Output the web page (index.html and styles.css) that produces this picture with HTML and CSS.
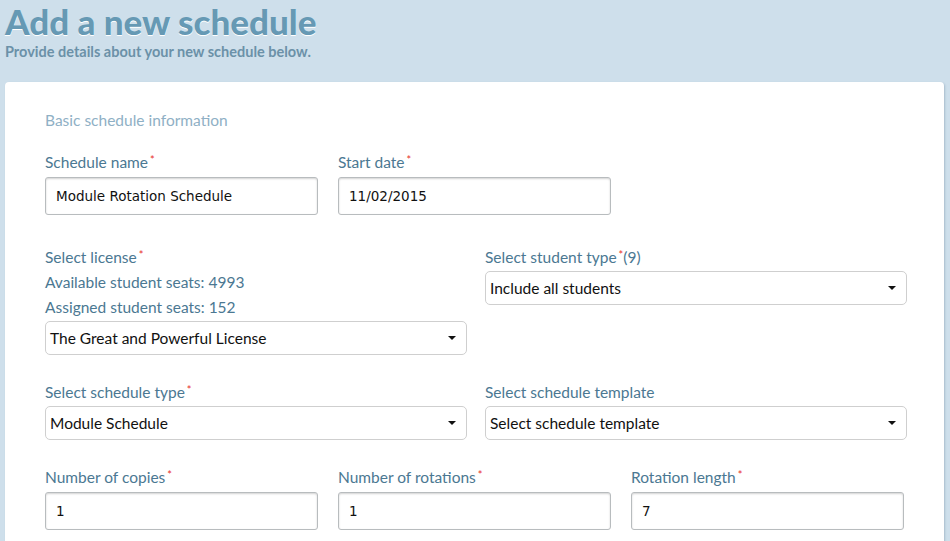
FILE: index.html
```html
<!DOCTYPE html>
<html>
<head>
<meta charset="utf-8">
<link rel="stylesheet" href="styles.css">
</head>
<body>
<header class="page-head">
  <h1 class="title">Add a new schedule</h1>
  <p class="subtitle">Provide details about your new schedule below.</p>
</header>
<main class="card">
  <h2 class="section">Basic schedule information</h2>

  <div class="row three row-first">
    <div class="field">
      <label class="label">Schedule name<span class="req">*</span></label>
      <div class="input">Module Rotation Schedule</div>
    </div>
    <div class="field">
      <label class="label">Start date<span class="req">*</span></label>
      <div class="input">11/02/2015</div>
    </div>
  </div>

  <div class="row two">
    <div class="field">
      <label class="label">Select license<span class="req">*</span></label>
      <div class="info">Available student seats: 4993</div>
      <div class="info">Assigned student seats: 152</div>
      <div class="select"><span>The Great and Powerful License</span><i class="caret"></i></div>
    </div>
    <div class="field">
      <label class="label">Select student type<span class="req">*</span>(9)</label>
      <div class="select"><span>Include all students</span><i class="caret"></i></div>
    </div>
  </div>

  <div class="row two">
    <div class="field">
      <label class="label">Select schedule type<span class="req">*</span></label>
      <div class="select"><span>Module Schedule</span><i class="caret"></i></div>
    </div>
    <div class="field">
      <label class="label">Select schedule template</label>
      <div class="select"><span>Select schedule template</span><i class="caret"></i></div>
    </div>
  </div>

  <div class="row three">
    <div class="field">
      <label class="label">Number of copies<span class="req">*</span></label>
      <div class="input">1</div>
    </div>
    <div class="field">
      <label class="label">Number of rotations<span class="req">*</span></label>
      <div class="input">1</div>
    </div>
    <div class="field">
      <label class="label">Rotation length<span class="req">*</span></label>
      <div class="input">7</div>
    </div>
  </div>
</main>
</body>
</html>
```

FILE: styles.css
```css
html, body {
  margin: 0;
  padding: 0;
}
body {
  background: #cedfeb;
  font-family: Lato, "Open Sans", sans-serif;
  width: 950px;
  height: 541px;
  overflow: hidden;
}
.page-head {
  padding: 0 0 0 5px;
  height: 82px;
}
.title {
  margin: 0;
  font-size: 35px;
  line-height: 42px;
  font-weight: 900;
  color: #6699b4;
  text-shadow: 0 1px 0 #ffffff;
}
.subtitle {
  margin: 1px 0 0;
  font-size: 14.5px;
  line-height: 18px;
  color: #6b91a8;
  font-weight: 700;
}
.card {
  margin-left: 5px;
  width: 939px;
  height: 470px;
  background: #ffffff;
  border-radius: 4px 4px 0 0;
  box-shadow: 1px 1px 2px rgba(60, 90, 120, 0.25);
  box-sizing: border-box;
  padding: 26px 0 0 40px;
}
.section {
  margin: 0;
  font-size: 15.5px;
  line-height: 25px;
  font-weight: 400;
  color: #8fb0c5;
}
.row {
  display: flex;
  margin-top: 25px;
}
.row-first {
  margin-top: 17px;
}
.row.three {
  gap: 20px;
}
.row.three .field {
  width: 273px;
}
.row.two {
  gap: 18px;
}
.row.three + .row.two {
  margin-top: 30px;
}
.row.two .field {
  width: 422px;
}
.label {
  display: block;
  font-size: 15.5px;
  line-height: 25px;
  color: #4b7892;
  margin-bottom: 2px;
}
.row.two .label {
  margin-bottom: 1px;
}
.info {
  font-size: 15.5px;
  line-height: 25px;
  color: #4b7892;
}
.field .info + .select {
  margin-top: 1px;
}
.field .info:first-of-type {
  margin-top: -1px;
}
.req {
  color: #e8302a;
  font-size: 11px;
  line-height: 0;
  vertical-align: 4px;
  margin-left: 2px;
}
.input {
  box-sizing: border-box;
  height: 38px;
  border: 1px solid #b8bcbe;
  border-radius: 3px;
  box-shadow: inset 0 1px 2px rgba(0, 0, 0, 0.18);
  padding: 0 10px;
  font-family: "DejaVu Sans", sans-serif;
  font-size: 13.5px;
  line-height: 36px;
  color: #111111;
}
.select {
  box-sizing: border-box;
  height: 34px;
  border: 1px solid #cfcfcf;
  border-radius: 5px;
  background: #ffffff;
  padding: 0 10px 0 4px;
  display: flex;
  align-items: center;
  justify-content: space-between;
  font-size: 15.5px;
  color: #111111;
}
.caret {
  width: 0;
  height: 0;
  border-left: 4px solid transparent;
  border-right: 4px solid transparent;
  border-top: 4px solid #111111;
}
```
